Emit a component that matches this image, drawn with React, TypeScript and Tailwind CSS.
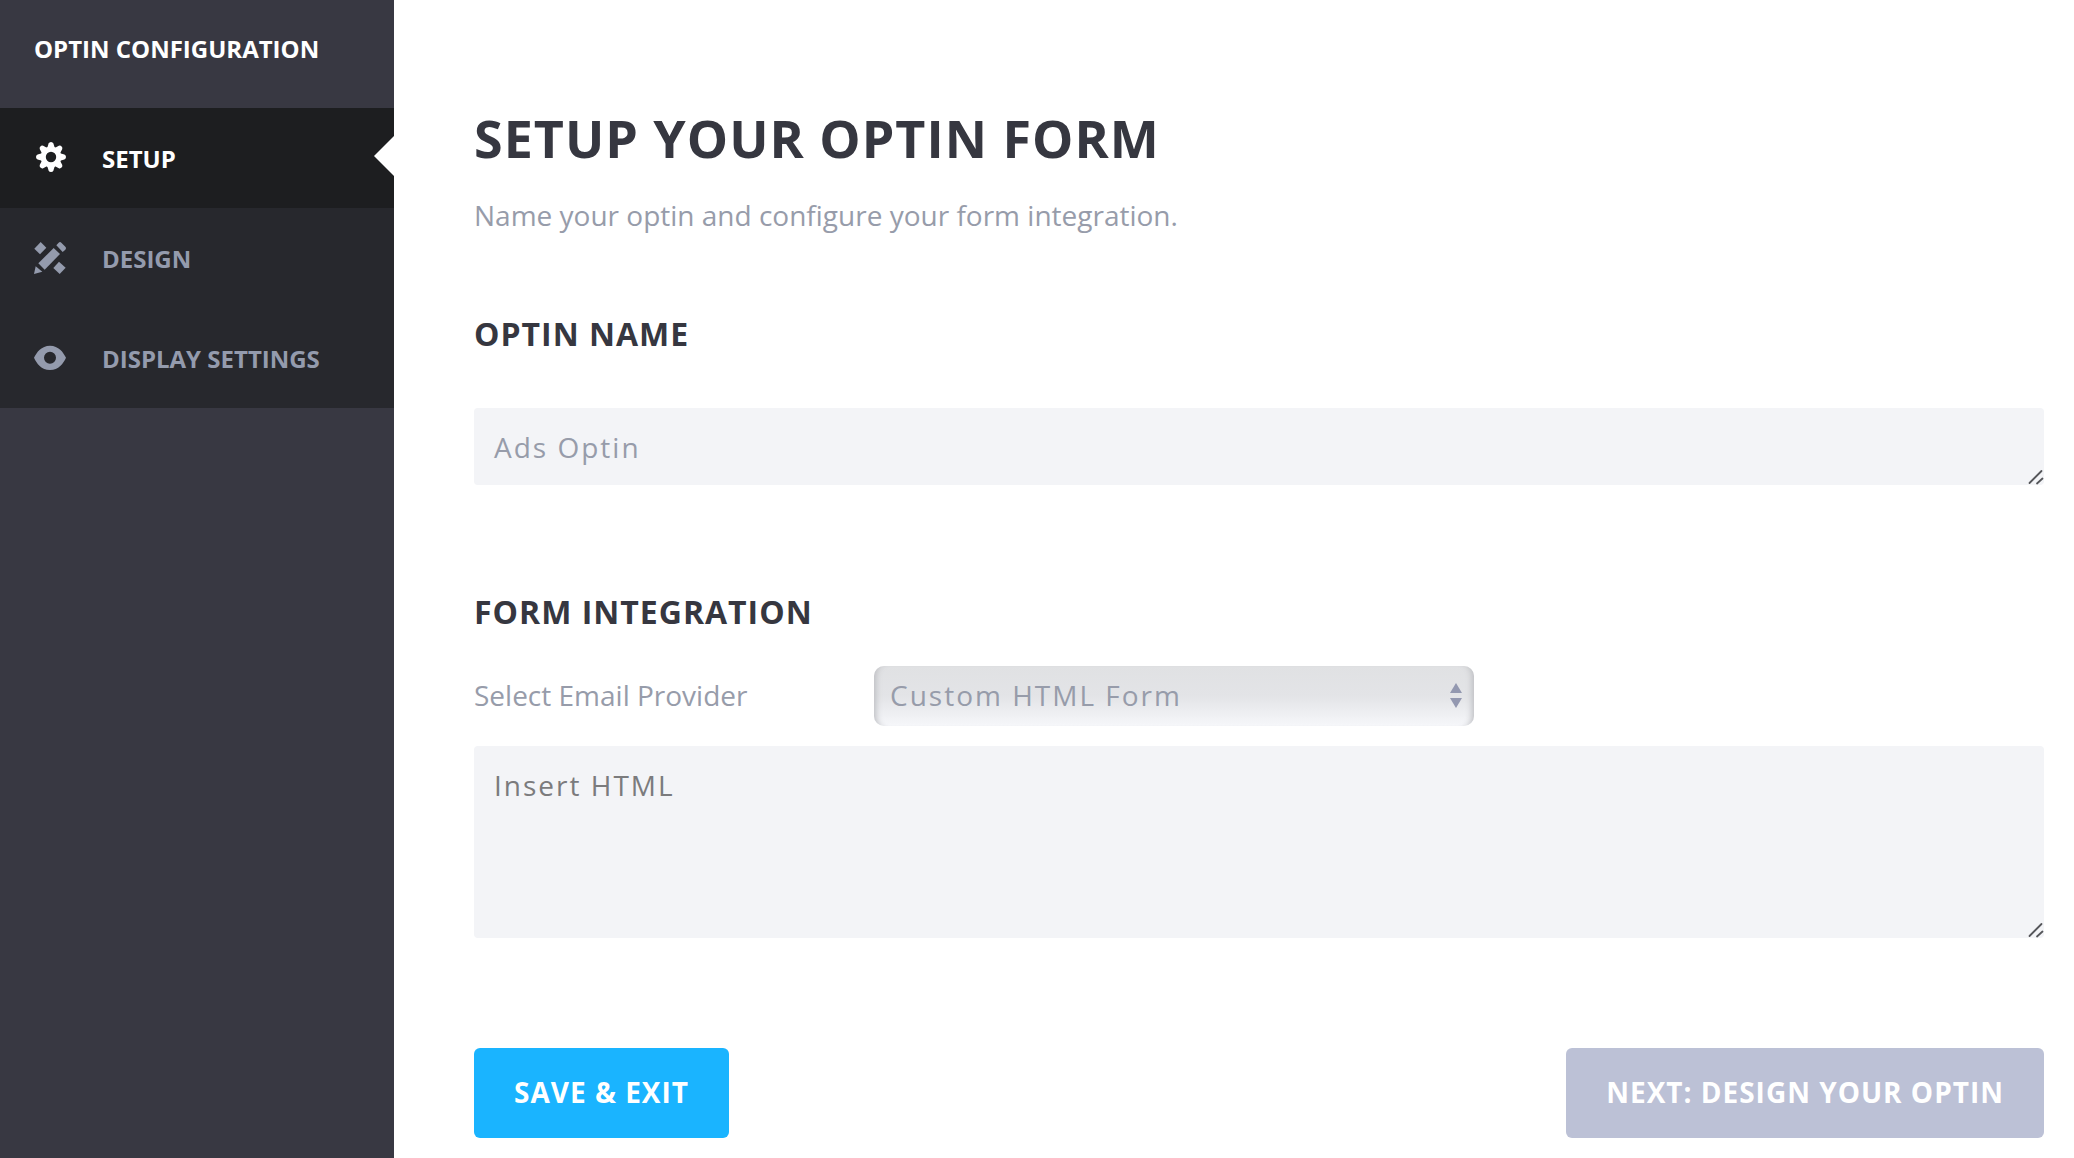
import React from 'react';

interface NavItem {
  id: string;
  label: string;
  icon: React.ReactNode;
}

const teeth = [0, 45, 90, 135, 180, 225, 270, 315];

const GearIcon = () => (
  <svg viewBox="-17 -15 32 32" className="h-8 w-8" fill="currentColor" aria-hidden="true">
    <path
      fillRule="evenodd"
      d="M0 -10.4 A10.4 10.4 0 1 0 0 10.4 A10.4 10.4 0 1 0 0 -10.4 Z M0 -5.2 A5.2 5.2 0 1 1 0 5.2 A5.2 5.2 0 1 1 0 -5.2 Z"
    />
    {teeth.map((angle) => (
      <path
        key={angle}
        transform={`rotate(${angle})`}
        d="M-3.8 -9 L-2.4 -13.4 Q-1.8 -15 0 -15 Q1.8 -15 2.4 -13.4 L3.8 -9 Z"
      />
    ))}
  </svg>
);

const DesignIcon = () => (
  <svg viewBox="0 0 96 96" className="h-8 w-8" fill="currentColor" aria-hidden="true">
    <path d="M20 0 L37 17 L18 37 L1 20 Z" />
    <path d="M75 59 L95 77 L77 96 L58 78 Z" />
    <path d="M59 18 L78 36 L32 83 L13 64 Z" />
    <path d="M67 10 L74 2 Q78 -2 82 2 L94 14 Q98 18 94 23 L86 30 Z" />
    <path d="M5 73 L25 89 L0 96 Z" />
  </svg>
);

const EyeIcon = () => (
  <svg viewBox="0 0 96 96" className="h-8 w-8" fill="currentColor" aria-hidden="true">
    <path
      fillRule="evenodd"
      d="M48 11 C74 11 88 31 96 47 C88 64 74 84 48 84 C22 84 8 64 0 47 C8 31 22 11 48 11 Z M48 29 A18 18 0 1 0 48 65 A18 18 0 1 0 48 29 Z"
    />
  </svg>
);

const ResizeGrip = () => (
  <svg
    viewBox="0 0 16 16"
    className="pointer-events-none absolute bottom-0 right-0 h-4 w-4"
    stroke="#55565a"
    strokeWidth="1.8"
    strokeLinecap="round"
    aria-hidden="true"
  >
    <path d="M1.5 14 L13.5 2" />
    <path d="M9 14.5 L14.5 9.5" />
  </svg>
);

const navItems: NavItem[] = [
  { id: 'setup', label: 'SETUP', icon: <GearIcon /> },
  { id: 'design', label: 'DESIGN', icon: <DesignIcon /> },
  { id: 'display', label: 'DISPLAY SETTINGS', icon: <EyeIcon /> },
];

const Sidebar: React.FC<{ active: string }> = ({ active }) => (
  <aside className="w-[394px] shrink-0 bg-[#383842] text-2xl font-bold">
    <h2 className="flex h-27 items-start px-8.5 pt-8 leading-[34px] text-white">OPTIN CONFIGURATION</h2>
    <nav>
      {navItems.map((item) => (
        <a
          key={item.id}
          href={`#${item.id}`}
          className={
            item.id === active
              ? 'relative flex h-25 items-center bg-[#1d1e20] px-8.5 text-white'
              : 'relative flex h-25 items-center bg-[#27282d] px-8.5 text-[#949bad]'
          }
        >
          {item.icon}
          <span className="pl-9 pt-0.5">{item.label}</span>
          {item.id === active && (
            <svg viewBox="0 0 20 40" className="absolute right-0 top-7 h-10 w-5" fill="#ffffff" aria-hidden="true">
              <path d="M20 0 L0 20 L20 40 Z" />
            </svg>
          )}
        </a>
      ))}
    </nav>
  </aside>
);

export default function App() {
  return (
    <div className="flex min-h-screen bg-white font-['Open_Sans',sans-serif]">
      <Sidebar active="setup" />
      <main className="min-w-0 flex-1 pb-5 pl-20 pr-7.5 pt-28">
        <h1 className="text-[52px] font-bold leading-[52px] tracking-[1px] text-[#363740]">SETUP YOUR OPTIN FORM</h1>
        <p className="mt-7.5 text-[28px] leading-[42px] text-[#979caa]">
          Name your optin and configure your form integration.
        </p>

        <form onSubmit={(e) => e.preventDefault()}>
          <label
            htmlFor="optin-name"
            className="mt-19 block text-[32px] font-bold leading-[44px] tracking-[1px] text-[#363740]"
          >
            OPTIN NAME
          </label>
          <div className="relative mt-13">
            <textarea
              id="optin-name"
              defaultValue="Ads Optin"
              rows={1}
              className="block h-[77px] w-full resize-none rounded-[4px] bg-[#f3f4f7] p-5 text-[28px] leading-[38px] tracking-[2px] text-[#979caa] outline-none"
            />
            <ResizeGrip />
          </div>

          <h2 className="mt-[105px] text-[32px] font-bold leading-[44px] tracking-[1px] text-[#363740]">
            FORM INTEGRATION
          </h2>
          <div className="mt-8 flex items-center">
            <label htmlFor="provider" className="w-100 shrink-0 pb-0.5 text-[28px] leading-[42px] text-[#979caa]">
              Select Email Provider
            </label>
            <div className="relative w-150">
              <select
                id="provider"
                className="block h-15 w-full appearance-none rounded-[10px] bg-linear-to-b from-[#e0e1e3] via-[#e3e4e7] to-[#f6f7fa] px-4 pb-0.5 text-[28px] tracking-[2px] text-[#979caa] shadow-[inset_8px_0_6px_-6px_#bcbdc1,inset_-8px_0_6px_-6px_#bcbdc1] outline-none"
              >
                <option>Custom HTML Form</option>
              </select>
              <svg
                viewBox="0 0 12 26"
                className="pointer-events-none absolute right-3 top-4 h-[26px] w-3"
                fill="#9398b0"
                aria-hidden="true"
              >
                <path d="M6 1 L12 11 L0 11 Z" />
                <path d="M0 16 L12 16 L6 26 Z" />
              </svg>
            </div>
          </div>
          <div className="relative mt-5">
            <textarea
              aria-label="Insert HTML"
              placeholder="Insert HTML"
              className="block h-48 w-full resize-none rounded-[4px] bg-[#f3f4f7] p-5 text-[28px] leading-[38px] tracking-[2px] outline-none placeholder:text-[#7b7b7d]"
            />
            <ResizeGrip />
          </div>

          <div className="mt-[110px] flex items-center justify-between">
            <button
              type="submit"
              className="h-[90px] rounded-[6px] bg-[#1ab4ff] px-10 pb-0.5 text-[28px] font-bold tracking-[1px] text-white"
            >
              SAVE &amp; EXIT
            </button>
            <button
              type="button"
              className="h-[90px] rounded-[6px] bg-[#bcc1d6] px-10 pb-0.5 text-[28px] font-bold tracking-[1px] text-white"
            >
              NEXT: DESIGN YOUR OPTIN
            </button>
          </div>
        </form>
      </main>
    </div>
  );
}
